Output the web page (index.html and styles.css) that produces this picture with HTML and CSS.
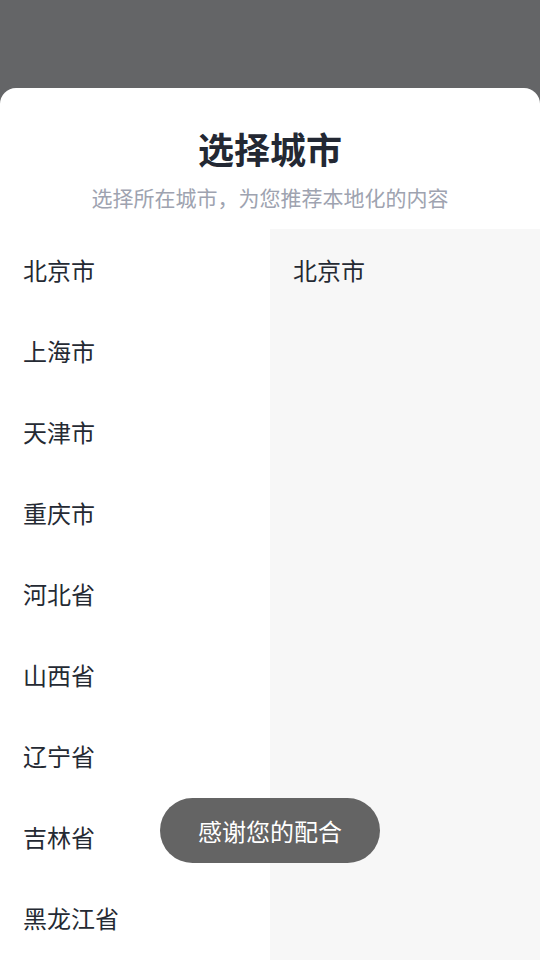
FILE: index.html
```html
<!DOCTYPE html>
<html lang="zh">
<head>
<meta charset="utf-8">
<title>选择城市</title>
<link rel="stylesheet" href="styles.css">
</head>
<body>
<div class="sheet">
  <div class="header">
    <div class="title">选择城市</div>
    <div class="subtitle">选择所在城市，为您推荐本地化的内容</div>
  </div>
  <div class="columns">
    <div class="col-left">
      <div class="row">北京市</div>
      <div class="row">上海市</div>
      <div class="row">天津市</div>
      <div class="row">重庆市</div>
      <div class="row">河北省</div>
      <div class="row">山西省</div>
      <div class="row">辽宁省</div>
      <div class="row">吉林省</div>
      <div class="row">黑龙江省</div>
    </div>
    <div class="col-right">
      <div class="row">北京市</div>
    </div>
  </div>
</div>
<div class="toast">感谢您的配合</div>
</body>
</html>
```
FILE: styles.css
```css
html, body {
  margin: 0;
  padding: 0;
  height: 100%;
  overflow: hidden;
}
body {
  background: #646567;
  font-family: "Noto Sans CJK SC", "Noto Sans", sans-serif;
}
.sheet {
  margin-top: 88px;
  height: 872px;
  background: #ffffff;
  border-radius: 16px 16px 0 0;
  display: flex;
  flex-direction: column;
  overflow: hidden;
}
.header {
  padding: 36px 0 17px;
  text-align: center;
}
.title {
  font-size: 36px;
  line-height: 48px;
  font-weight: 700;
  color: #232833;
}
.subtitle {
  margin-top: 10px;
  font-size: 21px;
  line-height: 30px;
  color: #9ea3b0;
}
.columns {
  flex: 1;
  display: flex;
}
.col-left {
  width: 270px;
  background: #ffffff;
}
.col-right {
  flex: 1;
  background: #f7f7f7;
}
.row {
  height: 81px;
  line-height: 81px;
  padding-left: 23px;
  font-size: 24px;
  color: #252a33;
}
.toast {
  position: fixed;
  top: 798px;
  left: 50%;
  transform: translateX(-50%);
  height: 65px;
  line-height: 65px;
  padding: 0 38px;
  border-radius: 33px;
  background: #646464;
  color: #ffffff;
  font-size: 24px;
  white-space: nowrap;
}
```
